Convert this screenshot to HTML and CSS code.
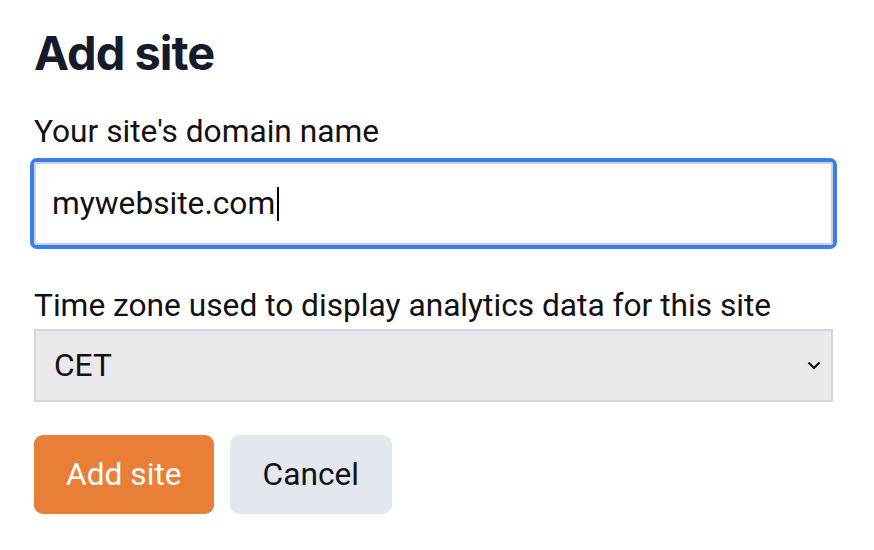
FILE: index.html
```html
<!DOCTYPE html>
<html>
<head>
<meta charset="utf-8">
<link rel="stylesheet" href="styles.css">
</head>
<body>
<form class="form">
  <h1 class="title">Add site</h1>
  <label class="label">Your site's domain name</label>
  <div class="input"><span class="input-text">mywebsite.com</span><span class="caret"></span></div>
  <label class="label label-tz">Time zone used to display analytics data for this site</label>
  <div class="select">
    <span>CET</span>
    <svg class="chevron" width="14" height="9" viewBox="0 0 14 9"><path d="M1.5 1.5 L7 7 L12.5 1.5" fill="none" stroke="#111" stroke-width="2.2"/></svg>
  </div>
  <div class="actions">
    <button type="button" class="btn btn-primary">Add site</button>
    <button type="button" class="btn btn-secondary">Cancel</button>
  </div>
</form>
</body>
</html>
```
FILE: styles.css
```css
html, body {
  margin: 0;
  padding: 0;
  background: #ffffff;
}
.form {
  padding: 23px 41px 0 34px;
  display: flex;
  flex-direction: column;
  font-family: Roboto, "Liberation Sans", sans-serif;
  color: #111111;
}
.title {
  margin: 0;
  font-family: Inter, "Liberation Sans", sans-serif;
  font-weight: 700;
  font-size: 47px;
  line-height: 60px;
  color: #151b2b;
  letter-spacing: -1px;
}
.label {
  margin-top: 29px;
  font-size: 31.7px;
  line-height: 40px;
  color: #111;
}
.input {
  margin-top: 10px;
  height: 83px;
  box-sizing: border-box;
  border: 2px solid #d1d1d1;
  border-radius: 3px;
  box-shadow: 0 0 0 4px #3a7cf2;
  display: flex;
  align-items: center;
  padding-left: 16px;
  font-size: 31.7px;
}
.caret {
  width: 2px;
  height: 34px;
  background: #000;
  margin-left: 2px;
}
.label-tz {
  margin-top: 41px;
}
.select {
  margin-top: 3px;
  height: 73px;
  box-sizing: border-box;
  border: 2px solid #d3d5da;
  background: #e8e8ed;
  display: flex;
  align-items: center;
  justify-content: space-between;
  padding: 0 10px 0 18px;
  font-size: 31.7px;
}
.actions {
  margin-top: 33px;
  display: flex;
  gap: 16px;
}
.btn {
  height: 79px;
  border: none;
  border-radius: 9px;
  font-family: Roboto, "Liberation Sans", sans-serif;
  font-size: 31.7px;
  padding: 0 32px;
}
.btn-primary {
  background: #e97e37;
  color: #ffffff;
}
.btn-secondary {
  background: #e3e7ee;
  color: #111;
  padding: 0 33px;
}
```
